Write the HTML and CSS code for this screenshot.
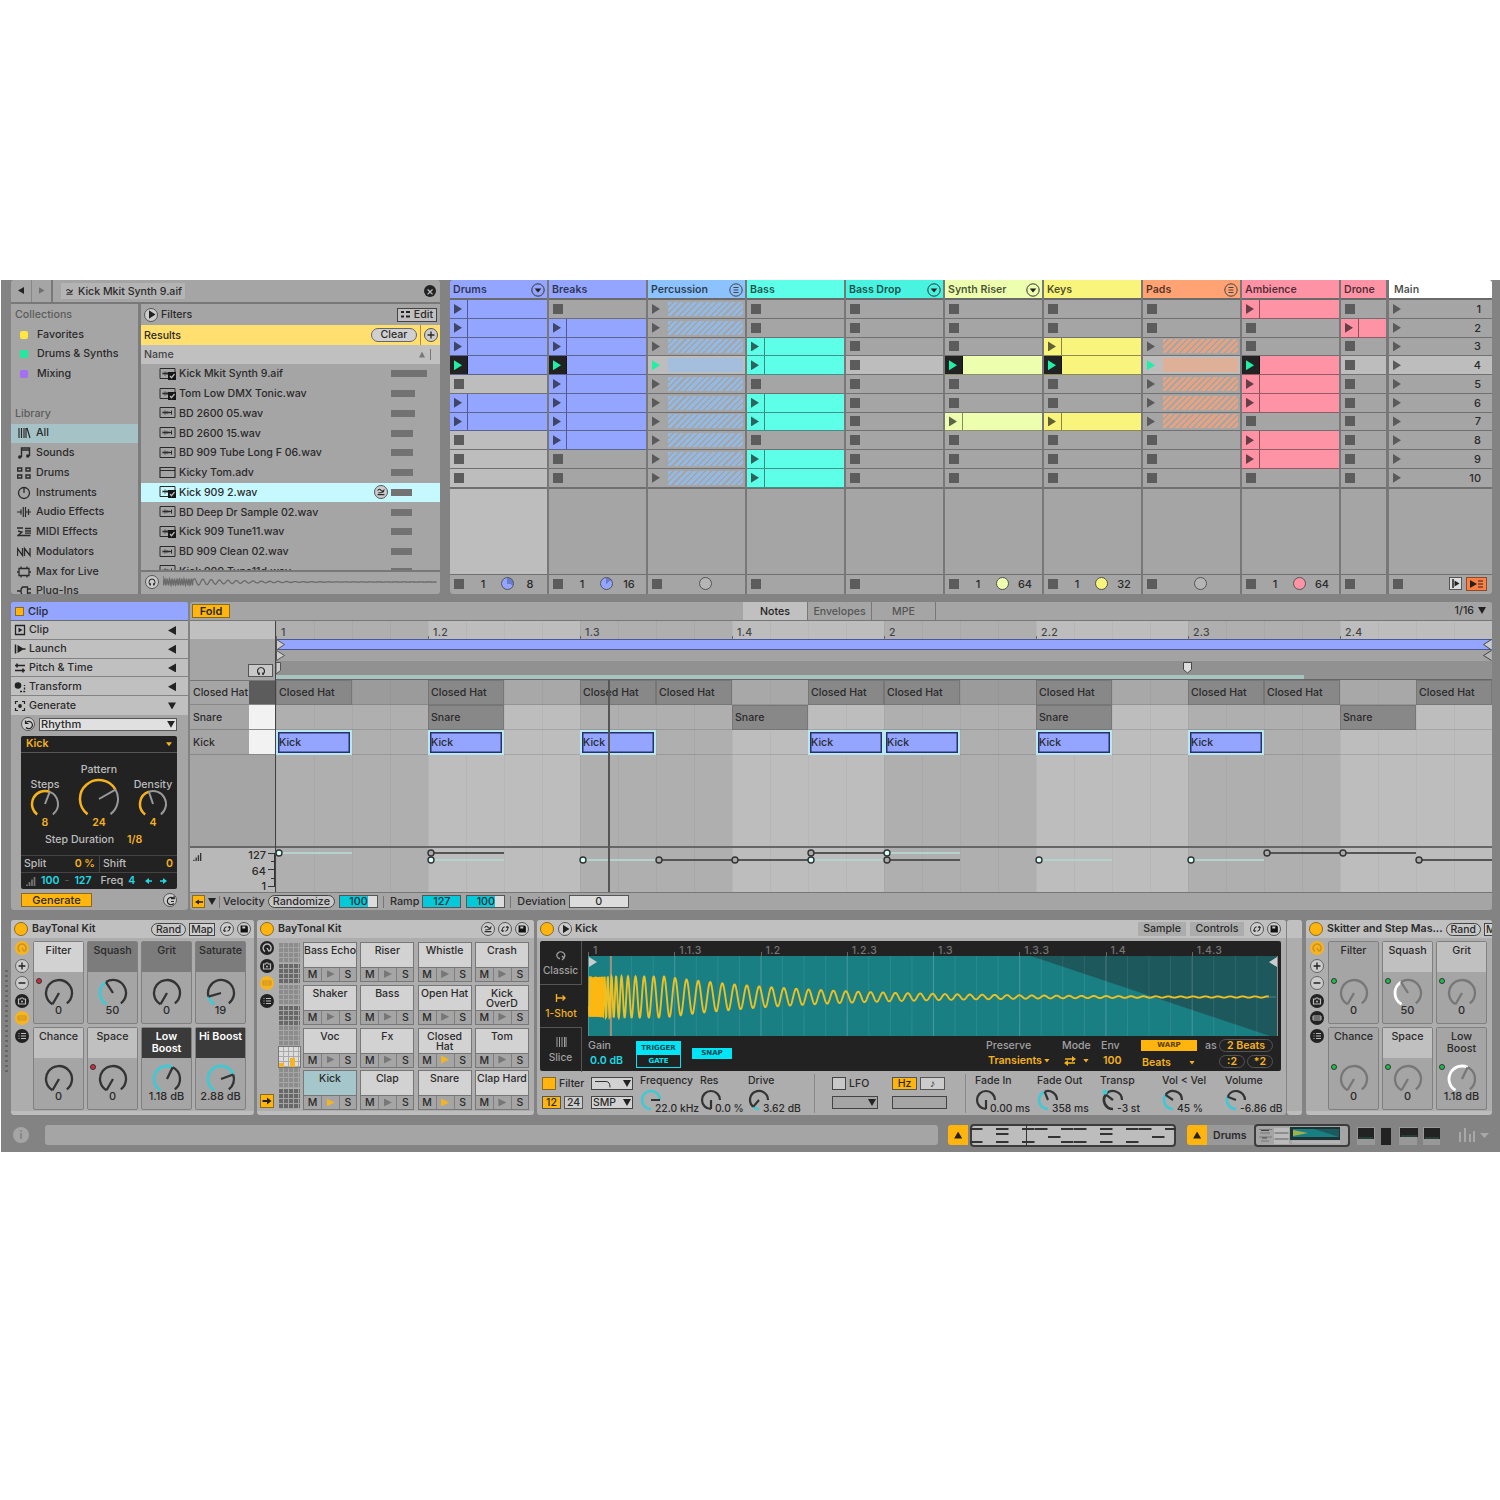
FILE: index.html
```html
<!doctype html>
<html>
  <head>
    <meta charset="utf-8">
    <title>Live</title>
    <link rel="stylesheet" href="styles.css">
  </head>
<body>

<svg width="0" height="0" class="defs">
  <symbol id="swap" viewBox="0 0 14 14"><path d="M3 5.500q2-3 4-.5t4-1M3 10h8M4 8l4-.5 2.500-1" fill="none" stroke="currentColor" stroke-width="1.3"/></symbol>
  <symbol id="rot" viewBox="0 0 14 14"><path d="M4 9.500C3 7 4.500 5 6.500 4.500M10 4.500c1 2.500-.5 4.500-2.500 5M2.800 8l1.200 1.800L6 9M8 5l2-.8L11.200 6" fill="none" stroke="currentColor" stroke-width="1.2"/></symbol>
  <symbol id="save" viewBox="0 0 14 14"><path d="M3 3h7l1.500 1.500v6.500H3z" fill="#111"/><path d="M5 4h3.500v2.300H5z" fill="#ccc"/></symbol>
  <symbol id="phones" viewBox="0 0 14 14"><path d="M4.800 10.500C2 7 4 3.500 7 3.500s5 3.500 2.200 7" fill="none" stroke="currentColor" stroke-width="1.2"/><path d="M4.300 8.500h1.500v2.500H4.300zM8.200 8.500h1.500v2.500H8.200z" fill="currentColor"/></symbol>
  <symbol id="wav" viewBox="0 0 18 14"><path d="M1 1.500h15v10H1z" fill="none" stroke="currentColor"/><path d="M4 5.500v2M6 4.500v4M8 5v3M10 5.500v2M12.500 4.500v4M4 6.500h8" stroke="currentColor" fill="none"/></symbol>
  <symbol id="wavok" viewBox="0 0 18 14"><path d="M16 5V1.500H1v10h8" fill="none" stroke="currentColor"/><path d="M4 5.500v2M6 4.500v4M8 5v3M4 6.500h6" stroke="currentColor" fill="none"/><path d="M9 5h8v8H9z" fill="#161616"/><path d="M11 9l1.500 1.700L15.500 7" fill="none" stroke="#bbb" stroke-width="1.200"/></symbol>
  <symbol id="adv" viewBox="0 0 18 14"><path d="M1 1.500h15v10H1zM1 4.500h15" fill="none" stroke="currentColor" stroke-width="1.200"/></symbol>
  <symbol id="all" viewBox="0 0 14 14"><path d="M2 2v10M4.500 2v10M7 2v10M9 2v10M10 2l3 10" fill="none" stroke="currentColor" stroke-width="1.200"/></symbol>
  <symbol id="sounds" viewBox="0 0 14 14"><path d="M4.500 11V2h8v8M4.500 4h8" fill="none" stroke="currentColor" stroke-width="1.400"/><circle cx="2.800" cy="11" r="1.800" fill="currentColor"/><circle cx="10.800" cy="10" r="1.800" fill="currentColor"/></symbol>
  <symbol id="drums" viewBox="0 0 14 14"><path d="M.7 2h4v3h-4zM9 2h4v3H9zM.7 9h4v3h-4zM9 9h4v3H9z" fill="none" stroke="currentColor" stroke-width="1.400"/></symbol>
  <symbol id="instr" viewBox="0 0 14 14"><circle cx="7" cy="7" r="5.500" fill="none" stroke="currentColor" stroke-width="1.300"/><path d="M7 2v5" stroke="currentColor" stroke-width="1.300"/></symbol>
  <symbol id="afx" viewBox="0 0 14 14"><path d="M0 7h4M4 4.500v5M6.300 2v10M8.500 2v10M8.500 7h5.500M11.500 4v6" fill="none" stroke="currentColor" stroke-width="1.200"/></symbol>
  <symbol id="mfx" viewBox="0 0 14 14"><path d="M0 3h6M1 6l4 1-4 3.500h12.500M8 3.500h6M8 6h6M8 8.200h6" fill="none" stroke="currentColor" stroke-width="1.300"/></symbol>
  <symbol id="mod" viewBox="0 0 14 14"><path d="M.5 11V3.500l5 7V3M7.500 11V3.500l5.500 7V3" fill="none" stroke="currentColor" stroke-width="1.300"/></symbol>
  <symbol id="max" viewBox="0 0 14 14"><path d="M2 3.500h10v7H2zM0 7h2M12 7h2M4 1.500v2M10 1.500v2M4 10.500v2M10 10.500v2" fill="none" stroke="currentColor" stroke-width="1.300"/></symbol>
  <symbol id="plug" viewBox="0 0 14 14"><path d="M0 7h4M10.500 3H6Q4 3.500 4 7t2 4h4.500zM10.500 5h3.500M10.500 9h3.500" fill="none" stroke="currentColor" stroke-width="1.300"/></symbol>
  <symbol id="ring" viewBox="0 0 14 14"><path d="M5 10.500A4 4 0 1 1 9.500 10.300M7 7l2 3.500" fill="none" stroke="currentColor" stroke-width="1.500"/></symbol>
  <symbol id="plus" viewBox="0 0 14 14"><path d="M3 7h8M7 3v8" stroke="currentColor" stroke-width="1.600"/></symbol>
  <symbol id="minus" viewBox="0 0 14 14"><path d="M3 7h8" stroke="currentColor" stroke-width="1.600"/></symbol>
  <symbol id="cam" viewBox="0 0 14 14"><path d="M3.500 5h2l.7-1h1.600l.7 1h2v5h-7z" fill="none" stroke="currentColor" stroke-width="1.200"/><circle cx="7" cy="7.500" r="1" fill="currentColor"/></symbol>
  <symbol id="dev" viewBox="0 0 14 14"><path d="M3 5h8v4H3zM3 7h8" fill="none" stroke="currentColor"/></symbol>
  <symbol id="list" viewBox="0 0 14 14"><path d="M3.500 4.500h1M6 4.500h5M3.500 7h1M6 7h5M3.500 9.500h1M6 9.500h5" stroke="currentColor" stroke-width="1.200"/></symbol>
</svg>

<div class="live">

  <div class="upper">
    <div class="browser">
      <div class="searchBar">
        <span class="nav"><i class="tri left"></i></span><span class="nav sep"><i class="tri dim"></i></span>
        <span class="query"><svg class="ic"><use href="#swap"/></svg>Kick Mkit Synth 9.aif</span>
        <span class="close">&times;</span>
      </div>
      <div class="browserBody">
        <div class="side" id="side"></div>
        <div class="results">
          <div class="filters"><span class="round"><i class="tri"></i></span>Filters<span class="edit"><svg width="9" height="9" viewBox="0 0 9 9"><path d="M0 2h3M5 2h4M0 6.500h3M5 6.500h4" stroke="#222" stroke-width="1.800"/></svg>Edit</span></div>
          <div class="found"><span>Results</span><span class="clear">Clear</span><span class="addBox"><svg class="round ic"><use href="#plus"/></svg></span></div>
          <div class="nameRow"><span>Name</span><i class="tri up"></i><b></b></div>
          <div class="files" id="files"></div>
          <div class="preview"><svg class="round ic"><use href="#phones"/></svg><svg width="276" height="18" id="previewWave"></svg></div>
        </div>
      </div>
    </div>
    <div class="session" id="session"></div>
  </div>

  <div class="clipView">
    <div class="clipPanel">
      <div class="clipHead"><i></i>Clip</div>
      <div class="fold"><svg class="ic"><path d="M2.500 2.500h9v9h-9z" fill="none" stroke="#222" stroke-width="1.300"/><path d="M5.500 4.500l4 2.500-4 2.500z" fill="#222"/></svg>Clip<i class="tri left"></i></div>
      <div class="fold"><svg class="ic"><path d="M2.500 2.500v9" stroke="#222" stroke-width="1.500"/><path d="M4.500 3l5 3v2l-5 3z" fill="#222"/><path d="M9 7h3.500" stroke="#222" stroke-width="1.600"/></svg>Launch<i class="tri left"></i></div>
      <div class="fold"><svg class="ic"><path d="M2 4.500h10M2 9.500h10M4 2.500v4M10 7.500v4" fill="none" stroke="#222" stroke-width="1.600"/></svg>Pitch &amp; Time<i class="tri left"></i></div>
      <div class="fold"><svg class="ic"><circle cx="5" cy="5.500" r="3.300" fill="#222"/><path d="M7 11.500h4.500V5" fill="none" stroke="#222" stroke-width="1.300" stroke-dasharray="2 1.300"/></svg>Transform<i class="tri left"></i></div>
      <div class="fold"><svg class="ic"><path d="M2.500 5V2.500H5M9 2.500h2.500V5M2.500 9v2.500H5M9 11.500h2.500V9" fill="none" stroke="#222" stroke-width="1.200"/><circle cx="7" cy="7" r="1.900" fill="#222"/></svg>Generate<i class="tri down"></i></div>
      <div class="gen">
        <div class="genTop"><svg class="round ic"><path d="M4 4.500A3.700 3.700 0 1 1 4 9.500M3.500 2.500v3h3" fill="none" stroke="#222" stroke-width="1.200"/></svg><span class="rhythm">Rhythm<i class="tri down"></i></span></div>
        <div class="genBox">
          <div class="genKick">Kick<i class="tri down"></i></div>
          <div class="genKnobs">
            <div class="gk">Steps<span data-r="13" data-v=".575"></span><b>8</b></div>
            <div class="gk big">Pattern<span data-r="19" data-v=".71"></span><b>24</b></div>
            <div class="gk">Density<span data-r="13" data-v=".435"></span><b>4</b></div>
          </div>
          <div class="stepDur">Step Duration <b>1/8</b></div>
          <div class="split"><span>Split<b>0 %</b></span><span>Shift<b>0</b></span></div>
          <div class="freq"><svg width="10" height="10" viewBox="0 0 10 10"><path d="M1 10V8.500M3.500 10V6M6 10V3.500M8.500 10V1" stroke="#777" stroke-width="1.700"/></svg><b>100</b><i>-</i><b>127</b><span>Freq</span><b>4</b><svg class="arrows" width="24" height="8"><path d="M3 4h5M16 4h5" stroke="#1fd8e4" stroke-width="1.600"/><path d="M1 4l4-3v6zM23 4l-4-3v6z" fill="#1fd8e4"/></svg></div>
        </div>
        <div class="genBottom"><span class="yBtn">Generate</span><svg class="round ic"><path d="M9.800 9.500A3.700 3.700 0 1 1 9.500 4.300M7 4.700h3.200V1.800M7 7.500h3" fill="none" stroke="#222" stroke-width="1.200"/></svg></div>
      </div>
    </div>
    <div class="editor">
      <div class="edTop">
        <span class="yBtn foldBtn">Fold</span>
        <span class="tab on">Notes</span><span class="tab">Envelopes</span><span class="tab">MPE</span>
        <span class="gridSize">1/16<i class="tri down"></i></span>
      </div>
      <div class="edMain">
        <div class="keys">
          <div class="kTop"></div>
          <div class="kMid"><span class="hp"><svg class="ic"><use href="#phones"/></svg></span></div>
          <div class="key"><span>Closed Hat</span><i class="black"></i></div>
          <div class="key"><span>Snare</span><i></i></div>
          <div class="key"><span>Kick</span><i></i></div>
          <div class="kRest"></div>
          <div class="kVel"><svg width="9" height="9" viewBox="0 0 10 10"><path d="M1 10V8.500M3.500 10V6M6 10V3.500M8.500 10V1" stroke="#333" stroke-width="1.500"/></svg><div><span>127</span><span>64</span><span>1</span></div><svg width="7" height="43"><path d="M0 5.500h7M3 13.500h4M0 21.500h7M3 30.500h4M0 38.500h7M6.500 5v34" stroke="#333" fill="none"/></svg></div>
        </div>
        <div class="roll">
          <div class="ruler" id="ruler"></div>
          <div class="loop"><svg width="10" height="12"><path d="M.5.500l8 5-8 5.500z" fill="#ccc" stroke="#555"/></svg><svg width="10" height="12"><path d="M9.500 .5l-8 5 8 5.500" fill="#ccc" stroke="#444"/></svg></div>
          <div class="start"><svg width="10" height="11"><path d="M.5.500l8 5-8 5z" fill="#ccc" stroke="#555"/></svg><svg width="10" height="11"><path d="M9.500 .5l-8 5 8 5" fill="#b5b5b5" stroke="#444"/></svg></div>
          <div class="scrub"><i></i><svg class="pin" width="9" height="12"><path d="M.5.500h8v7l-4 3.500-4-3.500z" fill="#ddd" stroke="#444"/></svg><svg class="half" width="6" height="13"><path d="M0 .5h4.500v8L0 12z" fill="#ccc" stroke="#555"/></svg></div>
          <div class="lane hat" id="hat"></div>
          <div class="lane" id="snare"></div>
          <div class="lane" id="kick"></div>
          <div class="blank"></div>
          <svg class="vel" id="vel" width="1216" height="44"></svg>
          <div class="playhead"></div>
        </div>
      </div>
      <div class="edBottom">
        <span class="yBtn mini"><svg width="10" height="8"><path d="M1 4l4-2.500v5z" fill="#222"/><path d="M4 4h5" stroke="#222" stroke-width="1.500"/></svg></span><i class="tri down"></i><em></em>Velocity<span class="pill">Randomize</span>
        <span class="num first" style="--f:77%">100</span><em></em>Ramp<span class="num" style="--f:100%">127</span><span class="num first" style="--f:77%">100</span><em></em>Deviation<span class="num wide" style="--f:0%">0</span>
      </div>
    </div>
  </div>

  <div class="devices">
    <div class="meter"></div>
    <div class="device macro">
      <div class="dHead"><i class="on"></i>BayTonal Kit<span class="push pill">Rand</span><span class="boxBtn">Map</span><svg class="round ic"><use href="#rot"/></svg><svg class="round ic"><use href="#save"/></svg></div>
      <div class="dBody">
        <div class="icons"><svg class="y"><use href="#ring"/></svg><svg class="l"><use href="#plus"/></svg><svg class="l"><use href="#minus"/></svg><svg><use href="#cam"/></svg><svg class="y"><use href="#dev"/></svg><svg><use href="#list"/></svg></div>
        <div class="macros" id="macros1"></div>
      </div>
    </div>
    <div class="device rack">
      <div class="dHead"><i class="on"></i>BayTonal Kit<svg class="push round ic"><use href="#swap"/></svg><svg class="round ic"><use href="#rot"/></svg><svg class="round ic"><use href="#save"/></svg></div>
      <div class="dBody">
        <div class="icons"><svg><use href="#ring"/></svg><svg><use href="#cam"/></svg><svg class="y"><use href="#dev"/></svg><svg><use href="#list"/></svg><span class="route"><svg class="plain" viewBox="0 0 12 12"><path d="M1.500 6h5" stroke="#222" stroke-width="1.800"/><path d="M6 2.500L10.500 6 6 9.500z" fill="#222"/></svg></span></div>
        <div class="overview"><i></i><i class="d"></i><i></i><i class="d"></i><i></i><i class="sel"></i><i></i><i class="d"></i></div>
        <div class="pads" id="pads"></div>
      </div>
    </div>
    <div class="device sampler">
      <div class="dHead"><i class="on"></i><span class="round"><i class="tri"></i></span>Kick<span class="push hTab">Sample</span><span class="hTab ctrl">Controls</span><svg class="round ic"><use href="#rot"/></svg><svg class="round ic"><use href="#save"/></svg></div>
      <div class="sample">
        <div class="modes">
          <div><svg class="ic"><path d="M6 10.500H5a4 3.500 0 1 1 5-1M8 8l2 2-2 2" fill="none" stroke="currentColor" stroke-width="1.300"/></svg>Classic</div>
          <div class="on"><svg class="ic"><path d="M2.500 3v8M3 7h8M8.500 4.500L11 7 8.500 9.500" fill="none" stroke="currentColor" stroke-width="1.400"/></svg>1-Shot</div>
          <div><svg class="ic"><path d="M3 2v10M5.500 2v10M8 2v10M10.500 2v10M12 2v10" stroke="currentColor"/></svg>Slice</div>
        </div>
        <div class="wave">
          <div class="wRuler"><span>1</span><span>1.1.3</span><span>1.2</span><span>1.2.3</span><span>1.3</span><span>1.3.3</span><span>1.4</span><span>1.4.3</span></div>
          <svg id="wave" width="690" height="80"></svg>
          <div class="wOpts">
            <div class="c1">Gain<b class="cy">0.0 dB</b></div>
            <div class="trig"><span>TRIGGER</span><span>GATE</span></div>
            <div class="snap">SNAP</div>
            <div class="c2">Preserve<b>Transients<i class="tri down"></i></b></div>
            <div class="c3">Mode<b><svg width="12" height="10"><path d="M1 3h8M3 7h8" stroke="#f5b21c" stroke-width="1.400"/><path d="M8 0l4 3-4 3zM4 4L0 7l4 3z" fill="#f5b21c"/></svg><i class="tri down"></i></b></div>
            <div class="c4">Env<b>100</b></div>
            <div class="c5"><span class="warp">WARP</span><b>Beats<i class="tri down"></i></b></div>
            <div class="as">as</div>
            <div class="c6"><b class="op">2 Beats</b><p><b class="op">:2</b><b class="op">*2</b></p></div>
          </div>
        </div>
      </div>
      <div class="ctl">
        <div class="filt"><p><i class="sq"></i>Filter<span class="dd"><svg width="20" height="8"><path d="M1 1.500h11q4 0 4 6" fill="none" stroke="#333"/></svg><i class="tri down"></i></span></p><p><span class="yBtn">12</span><span class="wBtn">24</span><span class="dd">SMP<i class="tri down"></i></span></p></div>
        <div class="sk">Frequency<p data-v="1">22.0 kHz</p></div>
        <div class="sk">Res<p data-v="0">0.0 %</p></div>
        <div class="sk">Drive<p data-v=".15">3.62 dB</p></div>
        <div class="lfo"><p><i class="sq off"></i>LFO</p><p><span class="dd gray"><i class="tri down"></i></span></p></div>
        <div class="hz"><p><span class="yBtn">Hz</span><span class="wBtn">&#9834;</span></p><p><span class="dd gray"></span></p></div>
        <div class="sk fadeIn">Fade In<p data-v="0">0.00 ms</p></div>
        <div class="sk">Fade Out<p data-v=".585">358 ms</p></div>
        <div class="sk tr">Transp<p data-v=".47" data-bi="1">-3 st</p></div>
        <div class="sk">Vol &lt; Vel<p data-v=".46">45 %</p></div>
        <div class="sk">Volume<p data-v=".41">-6.86 dB</p></div>
      </div>
    </div>
    <div class="device tail"><div class="dHead"></div></div>
    <div class="device macro second">
      <div class="dHead"><i class="on"></i>Skitter and Step Mas...<span class="pill">Rand</span><span class="boxBtn">Map</span></div>
      <div class="dBody">
        <div class="icons"><svg class="y"><use href="#ring"/></svg><svg class="l"><use href="#plus"/></svg><svg class="l"><use href="#minus"/></svg><svg><use href="#cam"/></svg><svg><use href="#dev"/></svg><svg><use href="#list"/></svg></div>
        <div class="macros" id="macros2"></div>
      </div>
    </div>
  </div>

  <div class="status">
    <span class="info">i</span><span class="field"></span>
    <span class="yUp"><i class="tri up"></i></span>
    <svg class="mini" width="206" height="23" id="mini"></svg>
    <span class="yUp"><i class="tri up"></i></span>
    <span class="drumsLbl">Drums</span>
    <svg width="190" height="23" class="chain">
      <rect x="1" y="1" width="94" height="21" rx="3" fill="#a5a5a5" stroke="#3c3c3c" stroke-width="2"/>
      <path d="M20 4h15v4H20zM20 10h15v4H20zM20 16h15v4H20z" fill="#bbb"/><path d="M5 5.500h13M6 9h10M5 13h13M7 17h8M21 9h13M21 15h13" stroke="#777"/><path d="M7 6.500h8M8 14h5" stroke="#444"/>
      <path d="M36 3h50v13H36z" fill="#1d3335"/><path d="M39 5h46v8H39z" fill="#1a7f83"/><path d="M39 6l15 3-15 3z" fill="#a0b04c"/><path d="M60 5h25v8z" fill="#1d5a5f"/><path d="M38 18h48" stroke="#b5b5b5" stroke-width="3"/>
      <path d="M103 3h18v18h-18zM145 3h18v18h-18zM169 3h17v18h-17z" fill="#989898"/>
      <path d="M104 4h16v11h-16zM127 4h10v17h-10zM146 4h18v9h-18zM170 4h16v11h-16z" fill="#222"/>
      <path d="M105 14h14M147 12h16M171 14h14" stroke="#2f5a50"/>
    </svg>
    <svg width="34" height="16" class="bars"><path d="M2 5v10M7 1v14M12 7v8M16 4v11" stroke="#a8a8a8" stroke-width="2"/><path d="M22 6h9l-4.500 5z" fill="#a8a8a8"/></svg>
  </div>
</div>

<script src="main.js"></script>
</body>
</html>
```

FILE: styles.css
```css
*{
  box-sizing: border-box;
}
body{
  margin: 0;
  background: #fff;
  font: 500 11px/14px Inter, "Liberation Sans", sans-serif;
  color: #2a2a2a;
}
p{
  margin: 0;
}
i, em{
  font-style: normal;
}
svg{
  display: block;
  flex: none;
}
.defs{
  position: absolute;
}
.live{
  margin: 280px 0 0 1px;
  padding: 0 8px 0 10px;
  width: 1499px;
  height: 872px;
  background: #838383;
  overflow: hidden;
  white-space: nowrap;
}
.ic{
  width: 14px;
  height: 14px;
}
.round{
  width: 14px;
  height: 14px;
  border-radius: 50%;
  border: 1px solid #555;
  background: #ccc;
  display: inline-flex;
  align-items: center;
  justify-content: center;
  flex: none;
}
.tri{
  display: inline-block;
  width: 8px;
  height: 9px;
  background: #222;
  clip-path: polygon(0 0, 100% 50%, 0 100%);
  flex: none;
}
.tri.left{
  clip-path: polygon(100% 0, 0 50%, 100% 100%);
}
.tri.down{
  height: 7px;
  clip-path: polygon(0 0, 100% 0, 50% 100%);
}
.tri.up{
  height: 7px;
  clip-path: polygon(0 100%, 100% 100%, 50% 0);
}
.round .tri{
  width: 7px;
  margin-left: 2px;
}
.yBtn{
  background: #ffb50d;
  border: 1px solid #8a6a1c;
  display: flex;
  align-items: center;
  justify-content: center;
}
.pill{
  border: 1px solid #444;
  border-radius: 8px;
  background: #c8c8c8;
  height: 13px;
  line-height: 11px;
  padding: 0 4px;
}

/* browser */
.upper{
  display: flex;
  gap: 10px;
  height: 314px;
}
.browser{
  width: 429px;
  background: #a5a5a5;
  border-radius: 3px;
  overflow: hidden;
  font-size: 10.600px;
}
.searchBar{
  height: 24px;
  display: flex;
  align-items: center;
  border-bottom: 2px solid #787878;
}
.nav{
  width: 20px;
  text-align: center;
}
.nav .tri{
  width: 6px;
  height: 7px;
}
.nav .dim{
  background: #707070;
}
.nav.sep{
  width: 22px;
  height: 22px;
  line-height: 22px;
  border-left: 1px solid #888;
  border-right: 2px solid #787878;
}
.query{
  margin-left: 8px;
  padding: 1px 3px 0;
  height: 16px;
  background: #b4b4b4;
  display: flex;
  align-items: center;
  gap: 3px;
}
.query .ic{
  width: 11px;
}
.close{
  margin-left: auto;
  margin-right: 4px;
  width: 12px;
  height: 12px;
  border-radius: 50%;
  background: #222;
  color: #bbb;
  font-size: 12px;
  line-height: 12px;
  text-align: center;
}
.browserBody{
  display: flex;
  height: 290px;
}
.side{
  width: 130px;
  padding-top: 1px;
  border-right: 3px solid #7c7c7c;
  overflow: hidden;
}
.side div{
  height: 19.75px;
  display: flex;
  align-items: center;
  gap: 5px;
  padding-left: 6px;
  font-size: 10.700px;
}
.side .title{
  color: #5c5c5c;
  padding-left: 4px;
}
.side .on{
  background: #a5c2c6;
}
.side i{
  width: 8px;
  height: 8px;
  margin: 0 4px 0 3px;
  border-radius: 2px;
}
.results{
  flex: 1;
  display: flex;
  flex-direction: column;
}
.filters{
  height: 21px;
  display: flex;
  align-items: center;
  gap: 3px;
  padding: 0 3px;
}
.edit{
  margin-left: auto;
  border: 1px solid #444;
  background: #c0c0c0;
  height: 14px;
  line-height: 12px;
  padding: 0 3px;
  display: flex;
  align-items: center;
  gap: 4px;
}
.found{
  height: 20px;
  background: #ffdf70;
  display: flex;
  align-items: center;
  padding-left: 3px;
}
.found span:first-child, .nameRow span{
  padding-top: 1px;
}
.clear{
  margin-left: auto;
  width: 46px;
  height: 14px;
  line-height: 12px;
  border: 1px solid #666;
  border-radius: 8px;
  background: #d0d0d0;
  text-align: center;
}
.addBox{
  margin-left: 3px;
  height: 20px;
  width: 20px;
  border-left: 1px solid #a58f48;
  display: flex;
  align-items: center;
  justify-content: center;
}
.nameRow{
  height: 19px;
  background: #c0c0c0;
  color: #444;
  display: flex;
  align-items: center;
  padding: 0 9px 0 3px;
}
.nameRow .tri{
  margin-left: auto;
  width: 6px;
  height: 6px;
  background: #777;
}
.nameRow b{
  width: 1px;
  height: 11px;
  margin-left: 5px;
  background: #777;
}
.files{
  height: 206px;
  overflow: hidden;
}
.file{
  height: 19.75px;
  display: grid;
  grid-template-columns: 18px 193px 15px auto;
  justify-content: start;
  align-items: center;
  padding-left: 18px;
  column-gap: 2px;
}
.file svg{
  width: 18px;
  height: 14px;
}
.file > span{
  padding-top: 1px;
}
.file .round{
  width: 14px;
}
.file b{
  height: 7px;
  background: #727272;
}
.file.on{
  background: #c6f9ff;
}
.preview{
  flex: 1;
  border-top: 2px solid #787878;
  display: flex;
  align-items: center;
  gap: 4px;
  padding: 0 0 2px 4px;
}

/* session */
.session{
  display: grid;
  grid-template-columns: repeat(9, 97px) 45px 104px;
  column-gap: 2px;
  background: #787878;
  border-radius: 3px;
  overflow: hidden;
  width: 1042px;
}
.track .head{
  height: 20px;
  border-bottom: 2px solid #6a6a6a;
  background: var(--h);
  color: rgba(0,0,0,0.7);
  font-weight: 600;
  font-size: 10.600px;
  display: flex;
  align-items: center;
  justify-content: space-between;
  padding: 1px 2px 0 3px;
}
.track .head svg{
  width: 14px;
  height: 14px;
}
.slot{
  height: 18.75px;
  border-bottom: 1px solid #707070;
  background: #a5a5a5;
  display: flex;
  align-items: center;
}
.slot.scene, .track.sel .slot, .track.sel .space{
  background: #bdbdbd;
}
.sq5{
  width: 10px;
  height: 10px;
  margin-left: 4px;
  background: #5c5c5c;
}
.slot .tri{
  margin-left: 4px;
  height: 10px;
  background: #5a5a5a;
}
.slot .btn{
  width: 18px;
  align-self: stretch;
  display: flex;
  align-items: center;
  border-right: 1px solid rgba(0,0,0,0.45);
}
.slot.clip, .track.sel .slot.clip{
  background: var(--c);
  border-color: rgba(0,0,0,0.5);
  border-bottom-color: color-mix(in srgb, var(--c) 50%, #222);
}
.slot.clip .tri{
  background: color-mix(in srgb, var(--c) 35%, #111);
}
.slot.play .btn{
  background: #222;
}
.slot.play .tri, .slot .tri.go{
  background: #20f0a5;
}
.hatch{
  flex: 1;
  height: 14px;
  margin: 0 2px 0 8px;
  background: repeating-linear-gradient(135deg, var(--c) 0 3px, #a5a5a5 3px 4.500px);
  opacity: 0.7;
}
.hatch.solid{
  background: var(--c);
  opacity: 0.5;
}
.space{
  height: 87px;
  border-top: 1px solid #707070;
  border-bottom: 1px solid #707070;
  background: #a5a5a5;
}
.foot{
  height: 20px;
  background: #a5a5a5;
  display: grid;
  grid-template-columns: 14px 38px 14px 28px;
  align-items: center;
  padding-bottom: 2px;
}
.foot span{
  text-align: center;
}
.foot .dot{
  width: 13px;
  height: 13px;
  border: 1px solid #555;
  border-radius: 50%;
  background: var(--c);
  margin-left: -1px;
}
.main{
  padding-left: 1px;
}
.main .head{
  background: #fff;
  padding-left: 5px;
}
.main .slot{
  justify-content: space-between;
  padding-right: 11px;
}
.main .foot{
  display: flex;
}
.main .back{
  margin-left: auto;
  width: 13px;
  height: 13px;
  border: 1px solid #555;
  background: #ddd;
}
.main .stopAll{
  margin: 0 5px 0 4px;
  width: 21px;
  height: 14px;
  border: 1px solid #8a4a2c;
  background: #ff7e42;
}

/* clip view */
.clipView{
  display: flex;
  gap: 2px;
  margin-top: 8px;
  height: 308px;
}
.clipPanel{
  width: 177px;
  background: #a5a5a5;
  border-radius: 3px;
  overflow: hidden;
}
.clipHead{
  height: 19px;
  background: #93a5ff;
  border-bottom: 1px solid #6c6c6c;
  display: flex;
  align-items: center;
  gap: 4px;
  padding-left: 4px;
}
.clipHead i{
  width: 9px;
  height: 9px;
  background: #ffb50d;
  border: 1px solid #8a6a1c;
}
.fold{
  height: 18.75px;
  background: #c0c0c0;
  border-bottom: 1px solid #838383;
  display: flex;
  align-items: center;
  gap: 2px;
  padding: 1px 12px 0 2px;
  font-size: 10.700px;
}
.fold:nth-child(6){
  border-bottom: 0;
}
.fold .tri{
  margin-left: auto;
}
.gen{
  padding: 2px 11px 0 10px;
}
.genTop{
  display: flex;
  gap: 4px;
  height: 15px;
  align-items: center;
}
.rhythm{
  flex: 1;
  height: 13px;
  line-height: 12px;
  background: #e0e0e0;
  border: 1px solid #555;
  display: flex;
  align-items: center;
  justify-content: space-between;
  padding: 0 1px;
}
.genBox{
  margin-top: 4px;
  height: 153px;
  border-radius: 2px;
  background: #222;
  color: #bdbdbd;
  font-size: 10.600px;
}
.genBox b, .wOpts b{
  font-weight: 600;
  color: #f5b21c;
}
.genKick{
  height: 17px;
  border-bottom: 1px solid #555;
  color: #f5b21c;
  font-weight: 600;
  display: flex;
  align-items: center;
  justify-content: space-between;
  padding: 1px 5px 0;
}
.genKick .tri, .wOpts .tri{
  width: 6px;
  height: 4px;
  background: #f5b21c;
}
.genKnobs{
  height: 76px;
  display: grid;
  grid-template-columns: 48px 1fr 48px;
  align-items: end;
}
.gk{
  display: flex;
  flex-direction: column;
  align-items: center;
  line-height: 13px;
}
.gk span{
  margin-top: -2px;
}
.gk b{
  margin-top: -3px;
}
.gk.big b{
  margin-top: -4px;
}
.gk.big span{
  margin-top: 2px;
}
.stepDur{
  height: 26px;
  padding: 4px 0 0 24px;
}
.stepDur b{
  margin-left: 10px;
}
.split{
  display: grid;
  grid-template-columns: 1fr 1fr;
  height: 18px;
  border-top: 1px solid #444;
  border-bottom: 1px solid #444;
}
.split span{
  display: flex;
  justify-content: space-between;
  align-items: center;
  padding: 1px 4px 0 3px;
}
.split span + span{
  border-left: 1px solid #444;
}
.freq{
  display: flex;
  align-items: center;
  height: 16px;
  padding: 1px 0 0 5px;
  gap: 5px;
}
.freq b{
  color: #1fd8e4;
}
.freq i{
  color: #555;
}
.freq span{
  margin-left: 4px;
}
.freq .arrows{
  margin-left: 4px;
}
.genBottom{
  display: flex;
  justify-content: space-between;
  align-items: center;
  height: 22px;
}
.genBottom .yBtn{
  width: 71px;
  height: 14px;
}

.editor{
  flex: 1;
  background: #a5a5a5;
  border-radius: 3px;
  overflow: hidden;
}
.edTop{
  height: 19px;
  border-bottom: 1px solid #777;
  display: flex;
  align-items: center;
}
.foldBtn{
  width: 38px;
  height: 14px;
  margin: 0 513px 0 2px;
  font-weight: 600;
}
.tab{
  width: 64px;
  line-height: 19px;
  height: 18px;
  text-align: center;
  color: #555;
  border-right: 1px solid #777;
  font-size: 10.600px;
}
.tab.on{
  width: 65px;
  background: #c0c0c0;
  color: #222;
}
.gridSize{
  margin-left: auto;
  padding-right: 6px;
  font-size: 10.600px;
}
.gridSize .tri{
  margin-left: 4px;
}
.edMain{
  display: flex;
  height: 271px;
}
.keys{
  width: 86px;
  border-right: 1px solid #444;
}
.kTop{
  height: 18px;
  background: #c0c0c0;
}
.kMid{
  height: 41px;
  display: flex;
  justify-content: flex-end;
  align-items: flex-end;
  padding: 0 2px 3px 0;
}
.hp{
  width: 25px;
  height: 13px;
  border: 1px solid #555;
  background: #c8c8c8;
  display: flex;
  align-items: center;
  justify-content: center;
}
.key{
  height: 25px;
  display: flex;
  border-bottom: 1px solid #888;
}
.key span{
  width: 59px;
  line-height: 25px;
  padding-left: 3px;
  font-size: 10.500px;
}
.key i{
  flex: 1;
  background: #f2f2f2;
}
.key .black{
  background: #5c5c5c;
}
.key:nth-child(3){
  border-top: 1px solid #777;
}
.key:nth-child(3) span{
  line-height: 23px;
}
.kRest{
  height: 93px;
  border-bottom: 2px solid #666;
}
.kVel{
  height: 44px;
  background: #b8b8b8;
  display: flex;
  align-items: flex-start;
}
.kVel > svg:first-child{
  margin: 4px 0 0 3px;
}
.kVel div{
  margin-left: auto;
  display: flex;
  flex-direction: column;
  align-items: flex-end;
  line-height: 15.500px;
  padding-right: 2px;
}
.roll{
  width: 1216px;
  position: relative;
  background: repeating-linear-gradient(90deg, rgba(0,0,0,0.04) 0 1px, transparent 1px 38px), repeating-linear-gradient(90deg, #afafaf 0 152px, #bdbdbd 152px 304px);
}
.ruler{
  height: 18px;
  display: grid;
  grid-template-columns: repeat(8, 1fr);
  color: #444;
}
.ruler span{
  padding: 5px 0 0 4px;
  font-size: 10.500px;
  letter-spacing: 0.300px;
  border-image: linear-gradient(to top, #666 5px, transparent 5px) 1;
  border-left: 1px solid;
}
.loop{
  height: 11px;
  background: #93a5ff;
  border-top: 1px solid #4c5896;
  border-bottom: 1px solid #4c5896;
  display: flex;
  justify-content: space-between;
}
.loop svg{
  margin-top: -1px;
}
.start{
  height: 11px;
  background: #a3a3a3;
  display: flex;
  justify-content: space-between;
}
.scrub{
  height: 19px;
  background: #919191;
  border-bottom: 1px solid #666;
  position: relative;
}
.scrub > i{
  position: absolute;
  left: 0;
  bottom: 0;
  width: 1028px;
  height: 4px;
  background: #a8c4be;
}
.pin{
  position: absolute;
  left: 907px;
  top: 1px;
}
.half{
  position: absolute;
  left: 0;
  top: 1px;
}
.lane{
  height: 25px;
  display: grid;
  grid-template-columns: repeat(16, 1fr);
  border-bottom: 1px solid rgba(0,0,0,0.12);
}
.lane.hat{
  background: rgba(0,0,0,0.11);
}
.note{
  grid-row: 1;
  background: #888;
  border: 1px solid #777;
  line-height: 23px;
  padding-left: 2px;
  font-size: 10.600px;
}
.note.kick{
  height: 25px;
  border: 2px solid #b9e9ee;
  background: #93a5ff;
  box-shadow: inset 0 0 0 1.500px #27306a;
  padding-left: 1px;
  line-height: 21px;
}
.blank{
  height: 93px;
  border-bottom: 2px solid #666;
}
.playhead{
  position: absolute;
  left: 332px;
  top: 59px;
  width: 2px;
  height: 212px;
  background: #555;
}
.edBottom{
  height: 18px;
  border-top: 1px solid #777;
  display: flex;
  align-items: center;
  padding-left: 2px;
  font-size: 10.800px;
}
.edBottom .mini{
  width: 13px;
  height: 13px;
  margin-right: 3px;
}
.edBottom em{
  width: 1px;
  height: 12px;
  background: #777;
  margin: 0 6px 0 4px;
}
.edBottom .mini + i + em{
  margin: 0 3px;
}
.edBottom .pill{
  margin: 0 0 0 3px;
  padding: 0 4px;
}
.num{
  width: 39px;
  height: 13px;
  line-height: 12px;
  text-align: center;
  border: 1px solid #555;
  margin: 0 1px 0 3px;
  background: linear-gradient(90deg, #04c9da var(--f), #dcdcdc var(--f));
}
.num.first{
  margin-left: 4px;
}
.num.wide{
  width: 60px;
}

/* devices */
.devices{
  display: flex;
  margin-top: 10px;
  height: 195px;
  position: relative;
}
.meter{
  position: absolute;
  left: -6px;
  top: 47px;
  width: 3px;
  height: 108px;
  background: repeating-linear-gradient(transparent 0 3px, #666 3px 5px);
}
.device{
  background: #adadad;
  border-radius: 3px;
  margin-right: 3px;
  overflow: hidden;
  border-bottom: 4px solid #bcbcbc;
}
.macro{
  width: 243px;
}
.rack{
  width: 277px;
}
.sampler{
  width: 749px;
  margin-right: 1px;
  border-bottom: 0;
}
.tail{
  width: 15px;
  margin-right: 4px;
}
.second{
  width: 186px;
  margin-right: 0;
}
.dHead{
  height: 18px;
  background: #c0c0c0;
  display: flex;
  align-items: center;
  gap: 3px;
  padding: 0 3px;
  font-weight: 600;
  font-size: 10.600px;
}
.rack .dHead{
  padding-right: 5px;
}
.sampler .dHead{
  padding-right: 5px;
}
.dHead .on{
  width: 14px;
  height: 14px;
  border-radius: 50%;
  background: #ffb50d;
  border: 1px solid #8a6a1c;
  margin-right: 1px;
  flex: none;
}
.dHead .push{
  margin-left: auto;
}
.boxBtn{
  border: 1px solid #444;
  background: #d0d0d0;
  height: 13px;
  line-height: 11px;
  padding: 0 1px;
  margin-right: 2px;
}
.dHead .pill, .boxBtn{
  font-weight: 500;
  font-size: 10.400px;
}
.hTab{
  width: 48px;
  height: 14px;
  text-align: center;
  background: #acacac;
  font-weight: 500;
}
.hTab.ctrl{
  width: 54px;
  margin: 0 3px 0 1px;
}
.dBody{
  display: flex;
  height: 173px;
}
.icons{
  width: 22px;
  padding: 3px 0 0 4px;
  display: flex;
  flex-direction: column;
  gap: 3.600px;
}
.icons svg{
  width: 14px;
  height: 14px;
  border-radius: 50%;
  background: #222;
  color: #bbb;
}
.icons .y{
  background: #f5b421;
  color: #d0901a;
}
.icons .l{
  background: #ccc;
  color: #222;
  border: 1px solid #666;
}
.route{
  margin-top: auto;
  margin-bottom: 3px;
  width: 14px;
  height: 14px;
  background: #ffb50d;
  border: 1px solid #8a6a1c;
}
.icons .plain{
  width: 12px;
  height: 12px;
  background: none;
}
.rack .icons{
  padding-left: 3px;
}
.macros{
  display: grid;
  grid-template-columns: repeat(4, 51px);
  grid-template-rows: 83px 83px;
  gap: 3px;
  padding-top: 3px;
}
.second .macros{
  grid-template-columns: repeat(3, 51px);
}
.mc{
  border: 1px solid #808080;
  border-radius: 2px;
  background: #a5a5a5;
  display: flex;
  flex-direction: column;
  align-items: center;
  position: relative;
}
.mc > span{
  width: 100%;
  height: 30px;
  padding-top: 3px;
  text-align: center;
  line-height: 11.500px;
  white-space: normal;
  margin-bottom: 6px;
  font-size: 10.700px;
  background: var(--b);
}
.mc.nw > span{
  white-space: nowrap;
}
.mc p{
  margin-top: -5px;
}
.led{
  position: absolute;
  left: 2px;
  top: 36px;
  width: 6px;
  height: 6px;
  border-radius: 50%;
  border: 1px solid #333;
  background: #d02a3c;
}
.second .led{
  background: #18c04a;
}
.overview{
  width: 21px;
  padding-top: 5px;
  display: flex;
  flex-direction: column;
  justify-content: space-between;
  height: 171px;
}
.overview i{
  height: 20px;
  background: repeating-linear-gradient(90deg, transparent 0 4px, #a5a5a5 4px 5px), repeating-linear-gradient(#8c8c8c 0 4px, #a5a5a5 4px 5px);
}
.overview .d{
  background: repeating-linear-gradient(90deg, transparent 0 4px, #a5a5a5 4px 5px), repeating-linear-gradient(#686868 0 4px, #a5a5a5 4px 5px);
}
.overview .sel{
  outline: 1px solid #777;
  background: linear-gradient(#f5b421, #f5b421) 0 16px/5px 5px no-repeat, linear-gradient(#f5b421, #f5b421) 11px 11px/5px 10px no-repeat, repeating-linear-gradient(90deg, transparent 0 4px, #aaa 4px 5px), repeating-linear-gradient(#ddd 0 4px, #aaa 4px 5px);
}
.pads{
  display: grid;
  grid-template-columns: repeat(4, 54px);
  grid-template-rows: repeat(4, 40px);
  gap: 2.800px 3.300px;
  padding: 4px 0 0 3px;
}
.pad{
  border: 1px solid #777;
  background: #a5a5a5;
  overflow: hidden;
}
.pad > div{
  height: 24px;
  background: #d2d2d2;
  text-align: center;
  line-height: 10.500px;
  padding-top: 3px;
  white-space: normal;
  font-size: 10.500px;
}
.pad.nw > div{
  white-space: nowrap;
}
.pad.on > div{
  background: #a5c6ca;
}
.pad p{
  display: grid;
  grid-template-columns: 17px 18px 1fr;
  text-align: center;
  border-top: 1px solid #777;
  line-height: 13px;
  font-size: 10.500px;
}
.pad p span + span{
  border-left: 1px solid #808080;
}
.pad .tri{
  background: #777;
  height: 8px;
}
.pad .tri.hit{
  background: #f5b421;
}

/* sampler */
.sample{
  margin: 3px 5px 0 3px;
  height: 130px;
  background: #222;
  border-radius: 2px;
  color: #a0a0a0;
  display: flex;
}
.modes{
  width: 42px;
  font-size: 10.200px;
}
.modes div{
  height: 43.500px;
  border-right: 1px solid #555;
  border-bottom: 1px solid #555;
  display: flex;
  flex-direction: column;
  align-items: center;
  justify-content: center;
  gap: 1px;
}
.modes .on{
  color: #f5b21c;
  border-right: 0;
}
.modes div:last-child{
  border-bottom: 0;
}
.wave{
  padding-left: 6px;
}
.wRuler{
  height: 15px;
  display: grid;
  grid-template-columns: repeat(8, 86.250px);
  color: #777;
}
.wRuler span{
  padding: 4px 0 0 4px;
  line-height: 12px;
  font-size: 10.500px;
  letter-spacing: 0.400px;
  border-image: linear-gradient(to top, #666 5px, transparent 5px) 1;
  border-left: 1px solid;
}
.wOpts{
  display: grid;
  grid-template-columns: 48px 56px 294px 76px 39px 40px 64px 14px 54px;
  line-height: 15px;
  padding: 2px 0 0;
  font-size: 10.600px;
}
.wOpts > div > b{
  display: flex;
  align-items: center;
  gap: 2px;
}
.wOpts .c2 b{
  padding-left: 2px;
}
.wOpts .c3 b{
  gap: 7px;
  height: 15px;
  padding-left: 2px;
}
.wOpts .c4 b{
  padding-left: 2px;
}
.wOpts .cy{
  color: #1fd8e4;
  padding-left: 2px;
}
.trig{
  width: 45px;
  height: 27px;
  margin-top: 3px;
  border: 1px solid #00e5f5;
  color: #00e5f5;
}
.trig span{
  display: block;
}
.trig, .snap, .warp{
  font: 700 7px/13px "DejaVu Sans", sans-serif;
  text-align: center;
}
.trig span:first-child, .snap{
  background: #00e5f5;
  color: #0a4a50;
}
.snap{
  width: 40px;
  height: 11px;
  margin-top: 10px;
  line-height: 11px;
}
.warp{
  display: block;
  width: 56px;
  height: 11px;
  margin: 2px 0;
  background: #ffb50d;
  color: #5a3f00;
  line-height: 11px;
}
.c5 b{
  width: 54px;
  justify-content: space-between;
  padding: 2px 0 0 1px;
}
.c6 p{
  display: flex;
  gap: 2px;
  margin-top: 2px;
}
.wOpts .op{
  flex: 1;
  height: 13px;
  line-height: 12px;
  margin-top: 1px;
  border: 1px solid #555;
  border-radius: 7px;
  justify-content: center;
  text-align: center;
}
.ctl{
  display: grid;
  grid-template-columns: 98px 60px 48px 66px 77px 75px 71px 63px 62px 63px auto;
  padding: 3px 0 0 5px;
  font-size: 10.500px;
}
.ctl > div > p{
  display: flex;
  align-items: center;
  gap: 3px;
  height: 19px;
}
.ctl .sk{
  line-height: 14px;
}
.ctl .sk > p{
  height: 25px;
}
.sk svg{
  margin-top: -2px;
}
.tr svg{
  margin-left: 2px;
}
.sk p b{
  font-weight: 500;
  font-size: 10.300px;
  margin-left: -10px;
  padding-top: 15px;
}
.sq{
  width: 14px;
  height: 13px;
  background: #ffb50d;
  border: 1px solid #8a6a1c;
}
.sq.off{
  background: #c8c8c8;
  border-color: #444;
}
.dd{
  width: 42px;
  height: 13px;
  margin-left: auto;
  margin-right: 7px;
  border: 1px solid #444;
  background: #d2d2d2;
  display: flex;
  align-items: center;
  justify-content: space-between;
  line-height: 11px;
  padding: 0 1px;
}
.dd svg{
  margin-left: 1px;
}
.dd.gray{
  background: #a5a5a5;
  width: 46px;
  margin: 0;
}
.dd.gray .tri{
  margin-left: auto;
}
.ctl .yBtn, .wBtn{
  width: 19px;
  height: 13px;
  border: 1px solid #555;
  text-align: center;
  line-height: 11px;
}
.wBtn{
  background: #ccc;
}
.lfo{
  padding-left: 17px;
  border-left: 1px solid #888;
}
.hz{
  padding-left: 1px;
  border-right: 1px solid #888;
}
.hz .yBtn, .hz .wBtn{
  width: 25px;
}
.hz .dd.gray{
  width: 55px;
}
.fadeIn{
  padding-left: 9px;
}

/* status bar */
.status{
  height: 37px;
  padding: 3px 0 0 2px;
  display: flex;
  align-items: center;
}
.info{
  width: 16px;
  height: 16px;
  border-radius: 50%;
  background: #a5a5a5;
  color: #838383;
  text-align: center;
  font-weight: 700;
  line-height: 16px;
}
.field{
  width: 895px;
  height: 20px;
  margin: 0 10px 0 16px;
  border-radius: 3px;
  background: #a5a5a5;
}
.yUp{
  width: 20px;
  height: 20px;
  border-radius: 3px 0 0 3px;
  background: #ffb50d;
  display: flex;
  align-items: center;
  justify-content: center;
}
.mini + .yUp{
  margin-left: 11px;
}
.status .mini{
  margin-left: 2px;
}
.drumsLbl{
  width: 47px;
  padding-left: 6px;
  background: #999;
  height: 20px;
  line-height: 21px;
  font-weight: 600;
  font-size: 10.500px;
}
.chain{
  margin-right: 14px;
}
```

FILE: main.js
```js
function el(id){
  return document.getElementById(id);
}

// arc on a circle, angles in degrees clockwise from the top
function arc(c,r,a,b){
  var p=function(d){
    var t=d*Math.PI/180;
    return (c+r*Math.sin(t)).toFixed(2)+" "+(c-r*Math.cos(t)).toFixed(2);
  };
  return "M"+p(a)+"A"+r+" "+r+" 0 "+(b-a>180?1:0)+" 1 "+p(b);
}
function knob(r,v,from,to,on,off,ptr,w){
  var s=2*r+4, c=s/2, a=from+(to-from)*v, t=a*Math.PI/180;
  var h="<svg width="+s+" height="+s+" fill=none stroke-width="+w+">";
  h+="<path stroke='"+off+"' d='"+arc(c,r,a,to-0.1)+"'/>";
  if(v>0) h+="<path stroke='"+on+"' stroke-width="+(w+0.5)+" d='"+arc(c,r,from,a)+"'/>";
  h+="<path stroke='"+ptr+"' d='M"+c+" "+c+"L"+(c+r*Math.sin(t))+" "+(c-r*Math.cos(t))+"'/>";
  return h+"</svg>";
}

// browser
var side=[["t","Collections"],["#ffe83e","Favorites"],["#22e8a0","Drums & Synths"],["#a56ff5","Mixing"],["t",""],["t","Library"],
  ["all","All"],["sounds","Sounds"],["drums","Drums"],["instr","Instruments"],["afx","Audio Effects"],["mfx","MIDI Effects"],["mod","Modulators"],["max","Max for Live"],["plug","Plug-Ins"]];
el("side").innerHTML=side.map(function(s){
  if(s[0]=="t") return "<div class=title>"+s[1]+"</div>";
  if(s[0][0]=="#") return "<div><i style='background:"+s[0]+"'></i>"+s[1]+"</div>";
  return "<div class='"+(s[0]=="all"?"on":"")+"'><svg class=ic><use href='#"+s[0]+"'/></svg>"+s[1]+"</div>";
}).join("");

var files=[["wavok","Kick Mkit Synth 9.aif",36],["wavok","Tom Low DMX Tonic.wav",24],["wav","BD 2600 05.wav",24],["wav","BD 2600 15.wav",22],["wav","BD 909 Tube Long F 06.wav",22],
  ["adv","Kicky Tom.adv",22],["wavok","Kick 909 2.wav",21],["wav","BD Deep Dr Sample 02.wav",21],["wavok","Kick 909 Tune11.wav",21],["wav","BD 909 Clean 02.wav",21],["wav","Kick 909 Tune11d.wav",21]];
el("files").innerHTML=files.map(function(f,i){
  return "<div class='file"+(i==6?" on":"")+"'><svg><use href='#"+f[0]+"'/></svg><span>"+f[1]+"</span>"+
    (i==6?"<svg class='round ic'><use href='#swap'/></svg>":"<span></span>")+"<b style='width:"+f[2]+"px'></b></div>";
}).join("");

var d="M0 3V9";
for(var x=0;x<274;x+=0.5){
  var am=x<30?3.500:3.500*Math.exp(-(x-30)/50);
  d+="L"+x+" "+(9+am*Math.sin(x<30?x*2.600:x*0.75)).toFixed(2);
}
el("previewWave").innerHTML="<path fill=none stroke='#6a6a6a' stroke-width=1.3 d='"+d+"'/>";

// session: c clip, p playing clip, s stop, g group, G playing group
var tracks=[["Drums","#93a5ff","cccpsccsss","v","1","8"],["Breaks","#93a5ff","sccpccccss","","1","16"],["Percussion","#8cc2fd","gggGgggggg","o","",""],
  ["Bass","#5dffe9","ssccsccscc"],["Bass Drop","#48f3e0","ssssssssss","v"],["Synth Riser","#edffae","ssspsscsss","v","1","64"],["Keys","#f8f47c","sscpsscsss","","1","32"],
  ["Pads","#ffa374","ssgGgggsss","o","",""],["Ambience","#ff93a6","csspccsccs","","1","64"],["Drone","#ff93a6","scssssssss"]];
var badge={
  v:"<svg viewBox='0 0 14 14'><circle cx=7 cy=7 r=6.2 fill=none stroke='#333' /><path d='M3.700 5.500h6.600L7 9.500z' fill='#222'/></svg>",
  o:"<svg viewBox='0 0 14 14'><circle cx=7 cy=7 r=6.2 fill=none stroke='#444' /><path d='M4.500 4.500h5M4.500 7h5M4.500 9.500h5' stroke='#444'/></svg>"
};
var pie={Drums:0.3,Breaks:0.15};
var html="";
tracks.forEach(function(t,i){
  html+="<div class='track"+(i==0?" sel":"")+"' style='--h:"+t[1]+";--c:"+t[1]+"'><div class=head>"+t[0]+(badge[t[3]]||"")+"</div>";
  t[2].split("").forEach(function(c,n){
    var sc=n==3?" scene":"";
    if(c=="s") html+="<div class='slot"+sc+"'><i class=sq5></i></div>";
    if(c=="c") html+="<div class='slot clip'><span class=btn><i class=tri></i></span></div>";
    if(c=="p") html+="<div class='slot clip play'><span class=btn><i class=tri></i></span></div>";
    if(c=="g"||c=="G") html+="<div class='slot"+sc+"'><i class='tri"+(c=="G"?" go":"")+"'></i><span class='hatch"+(c=="G"?" solid":"")+"'></span></div>";
  });
  html+="<div class=space></div><div class=foot><i class=sq5></i>";
  if(t[4]) html+="<span>"+t[4]+"</span><i class=dot style='background:conic-gradient(#6a7bd0 "+(pie[t[0]]||0)*360+"deg,"+t[1]+" 0)'></i><span>"+t[5]+"</span>";
  else if(t[3]=="o") html+="<span></span><i class=dot style='background:#b5b5b5'></i>";
  html+="</div></div>";
});
html+="<div class='track main'><div class=head>Main</div>";
for(var i=1;i<=10;i++) html+="<div class='slot"+(i==4?" scene":"")+"'><i class=tri></i>"+i+"</div>";
html+="<div class=space></div><div class=foot><i class=sq5></i><svg class=back viewBox='0 0 11 11'><path d='M3 1v9' stroke='#222' stroke-width=1.500 /><path d='M4.500 2.500l5 3-5 3z' fill='#222'/></svg>"+
  "<svg class=stopAll viewBox='0 0 19 12'><path d='M3 2l7 4-7 4z' fill='#222'/><path d='M11 3h5M11 6h5M11 9h5' stroke='#222'/></svg></div></div>";
el("session").innerHTML=html;

// note editor
el("ruler").innerHTML=["1","1.2","1.3","1.4","2","2.2","2.3","2.4"].map(function(r){return "<span>"+r+"</span>";}).join("");
function notes(id,name,cols){
  el(id).innerHTML=cols.map(function(c){
    return "<div class='note "+id+"' style='grid-column:"+(c+1)+"'>"+name+"</div>";
  }).join("");
}
notes("hat","Closed Hat",[0,2,4,5,7,8,10,12,13,15]);
notes("snare","Snare",[2,6,10,14]);
notes("kick","Kick",[0,2,4,7,8,10,12]);

// velocity stems: column, y, selected
var vel=[[0,5,1],[2,5,0],[2,12,1],[4,12,1],[5,12,0],[6,12,0],[7,5,0],[7,12,1],[8,12,0],[8,5,1],[10,12,1],[12,12,1],[13,5,0],[14,5,0],[15,12,0]];
el("vel").innerHTML=vel.map(function(v){
  var x=v[0]*76+3;
  return "<path d='M"+x+" "+v[1]+"h73' stroke='"+(v[2]?"#b5d2cc":"#555")+"' stroke-width=2 />";
}).join("")+vel.map(function(v){
  return "<circle cx="+(v[0]*76+3)+" cy="+v[1]+" r=3 stroke='#333' stroke-width=1.400 fill='"+(v[2]?"#d5fff8":"#aaa")+"'/>";
}).join("");

document.querySelectorAll(".gk span").forEach(function(s){
  s.innerHTML=knob(+s.dataset.r,+s.dataset.v,-143,143,"#f5b21c","#999","#999",2);
});
document.querySelectorAll(".sk p").forEach(function(p){
  var on=p.dataset.bi?"#333":"#42c8d2";
  p.innerHTML=knob(9,+p.dataset.v,-180,90,on,"#333","#333",2.2)+"<b>"+p.textContent+"</b>";
  if(p.dataset.bi) p.firstChild.innerHTML+="<circle cx=3 cy=3 r=2.500 fill='#42c8d2'/>";
});

// macros
function macros(id,list,on,off){
  el(id).innerHTML=list.map(function(m){
    return "<div class='mc"+(m[0]=="Low Boost"?"":" nw")+"'><span style='--b:"+m[3]+(m[3]=="#3a3a3a"?";color:#fff;font-weight:600":"")+"'>"+m[0]+"</span>"+
      knob(13,m[2],-150,143,on,off,off,2.300)+"<p>"+m[1]+"</p>"+(m[4]?"<i class=led></i>":"")+"</div>";
  }).join("");
}
macros("macros1",[["Filter","0",0,"#d2d2d2",1],["Squash","50",.4,"#7c7c7c"],["Grit","0",0,"#7c7c7c"],["Saturate","19",.15,"#7c7c7c"],
  ["Chance","0",0,"#c0c0c0"],["Space","0",0,"#c0c0c0",1],["Low Boost","1.18 dB",.6,"#3a3a3a"],["Hi Boost","2.88 dB",.75,"#3a3a3a"]],"#42c8d2","#333");
macros("macros2",[["Filter","0",0,"#a5a5a5",1],["Squash","50",.4,"#c0c0c0",1],["Grit","0",0,"#c0c0c0",1],
  ["Chance","0",0,"#a5a5a5",1],["Space","0",0,"#c0c0c0",1],["Low Boost","1.18 dB",.6,"#a5a5a5",1]],"#fff","#777");

var pads=["Bass Echo","Riser","Whistle","Crash","Shaker","Bass","Open Hat","Kick OverD","Voc","Fx","Closed Hat","Tom","Kick","Clap","Snare","Clap Hard"];
el("pads").innerHTML=pads.map(function(p,i){
  var wrap=i==7||i==10, hit=i==10||i==12||i==14;
  return "<div class='pad"+(wrap?"":" nw")+(i==12?" on":"")+"'><div>"+(wrap?p.replace(" ","<br>"):p)+"</div><p><span>M</span><span><i class='tri"+(hit?" hit":"")+"'></i></span><span>S</span></p></div>";
}).join("");

// sample waveform, pitch falls quickly then settles
var ph=0, w="";
for(var u=0;u<680;u+=0.25){
  ph+=0.25/12.4*(1+2.2*Math.exp(-u/28)+8*Math.exp(-u/11));
  var a=u<75?20.5:Math.max(0.6,20.5*Math.exp(-(u-75)/145));
  w+=(u?"L":"M")+(u+1)+" "+(41-a*Math.sin(2*Math.PI*(ph+0.35))).toFixed(2);
}
var g="<rect width=690 height=80 fill='#1a7f83'/><path d='M443 0H690V80H682z' fill='#1d585d'/>";
for(var k=0;k<32;k++) g+="<path d='M"+(k*21.56+0.5)+" 0v80' stroke='#fff' opacity="+(k%4==0?0.2:0.08)+" />";
g+="<path d='M23 0v80' stroke='#d09878' stroke-width=2 opacity=0.7 /><path d='M676 41h12' stroke='#5a7a90'/>";
g+="<path d='"+w+"' fill=none stroke='#ecc022' stroke-width=1.900 /><path d='M1 20l2 1h13v40H1z' fill='#ffb50d' opacity=0.850 />";
g+="<path d='M1 1l8 5-8 5zM689 1l-8 5 8 5z' fill='#ccc'/><path d='M689.500 0v80' stroke='#888'/>";
el("wave").innerHTML=g;

// clip overview
var m="<rect x=1 y=1 width=204 height=21 rx=3 fill='#bdbdbd' stroke='#3c3c3c' stroke-width=2 />";
[[5,[0,2,4,5,7,8,10,12,13,15]],[10,[2,10]],[13,[6,14]],[18,[0,2,4,7,8,10,12]]].forEach(function(r){
  r[1].forEach(function(c){ m+="<path d='M"+(c*13)+" "+r[0]+"h12.500' stroke='#333' stroke-width=2 />"; });
});
el("mini").innerHTML=m+"<path d='M56.500 1v21' stroke='#333'/>";
```
